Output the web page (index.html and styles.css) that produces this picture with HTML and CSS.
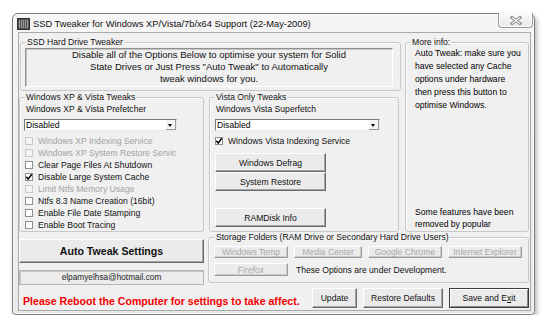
FILE: index.html
```html
<!DOCTYPE html>
<html lang="en">

<head>
    <meta charset="UTF-8">
    <meta name="viewport" content="width=device-width, initial-scale=1.0">
    <title>SSD Tweaker</title>
    <link rel="stylesheet" href="styles.css">
</head>

<body>
    <div class="window">
        <div class="titlebar">
            <svg class="app-icon" viewBox="0 0 13 12" width="13" height="12">
                <rect x="0.5" y="0.5" width="12" height="11" fill="#555" stroke="#2b2b2b"/>
                <path d="M2.5 2v8M4.5 2v8M6.5 2v8M8.5 2v8M10.5 2v8" stroke="#9a9a9a" stroke-width="1"/>
            </svg>
            <span class="title">SSD Tweaker for Windows XP/Vista/7b/x64 Support (22-May-2009)</span>
            <div class="close">
                <svg viewBox="0 0 12 9" width="12" height="9">
                    <path d="M2 1.5l8 6M10 1.5l-8 6" stroke="#8c8c8c" stroke-width="3" stroke-linecap="square"/>
                    <path d="M2 1.5l8 6M10 1.5l-8 6" stroke="#f6f6f6" stroke-width="1.2"/>
                </svg>
            </div>
        </div>

        <div class="content">
            <fieldset class="group top-group">
                <legend>SSD Hard Drive Tweaker</legend>
                <div class="intro">
                    Disable all of the Options Below to optimise your system for Solid<br>
                    State Drives or Just Press "Auto Tweak" to Automatically<br>
                    tweak windows for you.
                </div>
            </fieldset>

            <fieldset class="group info-group">
                <legend>More info:</legend>
                <p class="info-text">
                    Auto Tweak: make sure you<br>
                    have selected any Cache<br>
                    options under hardware<br>
                    then press this button to<br>
                    optimise Windows.
                </p>
                <p class="info-note">
                    Some features have been<br>
                    removed by popular
                </p>
            </fieldset>

            <fieldset class="group xp-group">
                <legend>Windows XP &amp; Vista Tweaks</legend>
                <div class="field-label">Windows XP &amp; Vista Prefetcher</div>
                <div class="combo xp-combo"><span>Disabled</span><span class="combo-arrow"></span></div>
                <ul class="checks">
                    <li class="check disabled"><span class="box"></span>Windows XP Indexing Service</li>
                    <li class="check disabled"><span class="box"></span>Windows XP System Restore Servic</li>
                    <li class="check"><span class="box"></span>Clear Page Files At Shutdown</li>
                    <li class="check checked"><span class="box"><svg viewBox="0 0 8 8" width="8" height="8"><path d="M1.3 3.8l1.9 2.3 3.6-4.9" fill="none" stroke="#000" stroke-width="1.5"/></svg></span>Disable Large System Cache</li>
                    <li class="check disabled"><span class="box"></span>Limit Ntfs Memory Usage</li>
                    <li class="check"><span class="box"></span>Ntfs 8.3 Name Creation (16bit)</li>
                    <li class="check"><span class="box"></span>Enable File Date Stamping</li>
                    <li class="check"><span class="box"></span>Enable Boot Tracing</li>
                </ul>
            </fieldset>

            <fieldset class="group vista-group">
                <legend>Vista Only Tweaks</legend>
                <div class="field-label">Windows Vista Superfetch</div>
                <div class="combo vista-combo"><span>Disabled</span><span class="combo-arrow"></span></div>
                <ul class="checks">
                    <li class="check checked"><span class="box"><svg viewBox="0 0 8 8" width="8" height="8"><path d="M1.3 3.8l1.9 2.3 3.6-4.9" fill="none" stroke="#000" stroke-width="1.5"/></svg></span>Windows Vista Indexing Service</li>
                </ul>
                <button class="btn tool-btn first">Windows Defrag</button>
                <button class="btn tool-btn">System Restore</button>
                <button class="btn tool-btn ramdisk">RAMDisk Info</button>
            </fieldset>

            <div class="auto-col">
                <button class="btn auto-btn">Auto Tweak Settings</button>
                <div class="email">elpamyelhsa@hotmail.com</div>
            </div>

            <fieldset class="group storage-group">
                <legend>Storage Folders (RAM Drive or Secondary Hard Drive Users)</legend>
                <div class="storage-row">
                    <button class="btn small-btn wide" disabled>Windows Temp</button>
                    <button class="btn small-btn" disabled>Media Center</button>
                    <button class="btn small-btn wide" disabled>Google Chrome</button>
                    <button class="btn small-btn wide" disabled>Internet Explorer</button>
                </div>
                <div class="storage-row second">
                    <button class="btn small-btn wide tall" disabled>Firefox</button>
                    <span class="dev-note">These Options are under Development.</span>
                </div>
            </fieldset>

            <div class="footer">
                <span class="reboot">Please Reboot the Computer for settings to take affect.</span>
                <div class="footer-buttons">
                    <button class="btn foot-btn update">Update</button>
                    <button class="btn foot-btn">Restore Defaults</button>
                    <button class="btn foot-btn default">Save and E<u>x</u>it</button>
                </div>
            </div>
        </div>
    </div>
</body>

</html>
```

FILE: styles.css
```css
* {
    box-sizing: border-box;
}

body {
    margin: 0;
    background: #fff;
    font-family: "Liberation Sans", Arial, sans-serif;
    font-size: 8.6px;
    color: #000;
}

/* window frame */
.window {
    width: 523px;
    height: 302px;
    margin: 13px 0 0 12px;
    border: 1px solid #7d7d7d;
    border-radius: 6px 6px 4px 4px;
    background: linear-gradient(#f5f5f5, #e9e9e9);
    box-shadow: 2px 3px 5px rgba(0, 0, 0, 0.28), inset 0 0 0 1px #fbfbfb;
    display: flex;
    flex-direction: column;
}

.titlebar {
    height: 18px;
    display: flex;
    align-items: center;
    padding-left: 4px;
}

.app-icon {
    display: block;
    margin-top: 1px;
}

.title {
    margin-left: 3px;
    margin-top: 1px;
    font-size: 9.3px;
    color: #111;
    white-space: nowrap;
}

.close {
    margin-left: auto;
    margin-right: 1px;
    align-self: flex-start;
    margin-top: -1px;
    width: 35px;
    height: 15px;
    border: 1px solid #9a9a9a;
    border-top: none;
    border-radius: 0 0 4px 4px;
    background: linear-gradient(#fafafa, #e8e8e8);
    box-shadow: inset 0 0 0 1px #fff;
    display: flex;
    align-items: center;
    justify-content: center;
}

.close svg {
    display: block;
}

/* client area */
.content {
    flex: 1;
    margin: 0 3px 3px 5px;
    border: 1px solid #a9a9a9;
    background: #f0f0f0;
    display: grid;
    grid-template-columns: 188px 196px 1fr;
    grid-template-rows: 55px 140px 54px 1fr;
    padding-top: 4px;
}

.group {
    margin: 0;
    padding: 0;
    min-width: 0;
    border: 1px solid #c8c8c8;
    border-radius: 3px;
    box-shadow: inset 1px 1px 0 #fbfbfb;
    white-space: nowrap;
    overflow: visible;
}

.group legend {
    padding: 0 1px;
    margin-left: 1px;
    line-height: 10px;
    color: #111;
}

.top-group {
    grid-column: 1 / 3;
    grid-row: 1;
    margin: 0 2px 1px 1px;
    padding: 1px 7px 0 4px;
}

.intro {
    height: 39px;
    border: 1px solid;
    border-color: #8f8f8f #fff #fff #8f8f8f;
    box-shadow: inset 1px 1px 0 #c4c4c4;
    text-align: center;
    line-height: 12px;
    font-size: 9.5px;
    color: #111;
}

.info-group {
    grid-column: 3;
    grid-row: 1 / 3;
    margin: 0 1px 0 2px;
    padding: 0 3px 1px 9px;
    display: flex;
    flex-direction: column;
    justify-content: space-between;
}

.info-group legend {
    margin-left: -4px;
}

.info-text {
    margin: 0;
    line-height: 13px;
}

.info-note {
    margin: 0;
    line-height: 12px;
}

.xp-group {
    grid-column: 1;
    grid-row: 2;
    margin: 0 3px 0 0;
    padding: 0 4px 0 4px;
    overflow: hidden;
}

.vista-group {
    grid-column: 2;
    grid-row: 2;
    margin: 0 4px 0 2px;
    padding: 0 4px 0 4px;
}

.field-label {
    margin-top: 1px;
    padding-left: 2px;
    line-height: 12px;
    color: #111;
}

.combo {
    margin-top: 4px;
    height: 12px;
    display: flex;
    align-items: center;
    border: 1px solid;
    border-color: #7a7a7a #e8e8e8 #e8e8e8 #7a7a7a;
    background: #fff;
    padding-left: 1px;
}

.combo span:first-child {
    flex: 1;
}

.xp-combo {
    width: 153px;
}

.vista-combo {
    width: 165px;
    margin-left: 1px;
}

.combo-arrow {
    width: 10px;
    height: 10px;
    margin-right: 0;
    background: #f4f4f4;
    border-right: 1px solid #9a9a9a;
    border-bottom: 1px solid #9a9a9a;
    position: relative;
}

.combo-arrow::after {
    content: "";
    position: absolute;
    left: 2px;
    top: 4px;
    border-left: 2.5px solid transparent;
    border-right: 2.5px solid transparent;
    border-top: 3px solid #000;
}

.checks {
    list-style: none;
    margin: 4px 0 0 1px;
    padding: 0;
}

.check {
    height: 12px;
    line-height: 12px;
    display: flex;
    align-items: center;
    color: #111;
}

.check .box {
    width: 8px;
    height: 8px;
    margin-right: 5px;
    border: 1px solid #8e8f8f;
    background: #fff;
    position: relative;
    flex: none;
}

.check .box svg {
    position: absolute;
    left: -1px;
    top: -1px;
}

.check.disabled {
    color: #a3a3a3;
}

.check.disabled .box {
    border-color: #c9c9c9;
    background: #f3f3f3;
}

/* buttons */
.btn {
    font-family: inherit;
    font-size: 8.6px;
    color: #111;
    padding: 0;
    background: #ebebeb;
    border: 1px solid;
    border-color: #fff #6a6a6a #6a6a6a #fff;
    box-shadow: inset -1px -1px 0 #a4a4a4;
    display: block;
}

.btn:disabled {
    color: #a8a8a8;
    border-color: #fff #9d9d9d #9d9d9d #fff;
    box-shadow: inset -1px -1px 0 #c9c9c9;
}

.tool-btn {
    width: 111px;
    height: 19px;
    margin-left: 1px;
}

.tool-btn.first {
    margin-top: 6px;
}

.tool-btn.ramdisk {
    margin-top: 17px;
}

.auto-col {
    grid-column: 1;
    grid-row: 3;
    margin-right: 3px;
    padding-top: 7px;
}

.auto-btn {
    width: 100%;
    height: 24px;
    font-size: 10.6px;
    font-weight: bold;
}

.email {
    margin-top: 7px;
    height: 15px;
    border: 1px solid;
    border-color: #8a8a8a #fff #fff #8a8a8a;
    box-shadow: inset 1px 1px 0 #c6c6c6;
    outline: 1px solid #b5b5b5;
    outline-offset: -1px;
    background: #ececec;
    text-align: center;
    line-height: 13px;
    font-size: 8.3px;
    color: #222;
}

.storage-group {
    grid-column: 2 / 4;
    grid-row: 3;
    margin: 0 1px 3px 1px;
    padding: 4px 5px 0 5px;
}

.storage-row {
    display: flex;
    align-items: center;
    gap: 6px;
}

.storage-row.second {
    margin-top: 5px;
}

.small-btn {
    width: 68px;
    height: 12px;
    line-height: 10px;
}

.small-btn.wide {
    width: 74px;
}

.small-btn.tall {
    height: 13px;
}

.dev-note {
    margin-left: 2px;
    color: #111;
}

.footer {
    grid-column: 1 / 4;
    grid-row: 4;
    display: flex;
    align-items: flex-start;
}

.reboot {
    margin-top: 9px;
    padding-left: 4px;
    line-height: 12px;
    font-size: 10.6px;
    font-weight: bold;
    color: #f40000;
    white-space: nowrap;
}

.footer-buttons {
    margin-left: auto;
    margin-right: 1px;
    margin-top: 2px;
    display: flex;
}

.foot-btn {
    width: 80px;
    height: 20px;
    margin-left: 6px;
}

.foot-btn.update {
    width: 45px;
}

.foot-btn.default {
    border-color: #3c3c3c;
    box-shadow: inset 1px 1px 0 #fff, inset -1px -1px 0 #8a8a8a;
}

.foot-btn u {
    text-decoration: underline;
}
```
